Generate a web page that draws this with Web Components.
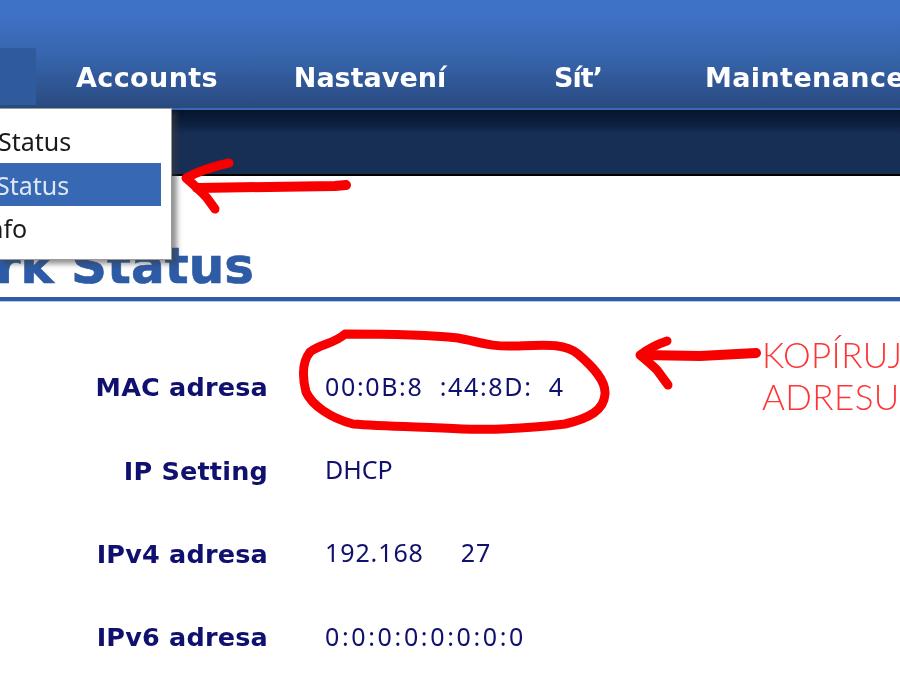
<!DOCTYPE html>
<html>
<head>
<meta charset="utf-8">
<title>Network Status</title>
<style>
  html, body { margin: 0; padding: 0; background: #fff; overflow: hidden; }
  body { width: 900px; height: 700px; position: relative; font-family: "Noto Sans", sans-serif; filter: blur(0.45px); }
</style>
</head>
<body>
<top-bar>
  <nav-tab slot="tabs" active style="--w:36px"></nav-tab>
  <nav-tab slot="tabs" style="--w:222px">Accounts</nav-tab>
  <nav-tab slot="tabs" style="--w:224px;letter-spacing:0">Nastavení</nav-tab>
  <nav-tab slot="tabs" style="--w:192px;letter-spacing:-1px">Sít’</nav-tab>
  <nav-tab slot="tabs" style="--w:262px">Maintenance</nav-tab>
</top-bar>
<page-title>rk Status</page-title>
<status-table>
  <status-row label="MAC adresa" style="--ls:1.65px">00:0B:8  :44:8D:  4</status-row>
  <status-row label="IP Setting">DHCP</status-row>
  <status-row label="IPv4 adresa" style="--ls:0.9px">192.168     27</status-row>
  <status-row label="IPv6 adresa" style="--ls:2.65px">0:0:0:0:0:0:0:0</status-row>
</status-table>
<drop-menu>
  <menu-item style="--x:-1px">Status</menu-item>
  <menu-item selected style="--x:-3px">Status</menu-item>
  <menu-item style="--x:-11px">nfo</menu-item>
</drop-menu>
<red-marks></red-marks>

<script>
class TopBar extends HTMLElement {
  constructor() {
    super();
    this.attachShadow({ mode: "open" });
    this.shadowRoot.innerHTML = `
    <style>
      :host { display: block; }
      .bar {
        height: 108px;
        display: flex;
        align-items: flex-end;
        overflow: hidden;
        background: linear-gradient(#3e72c6 0, #3e72c6 12%, #3766ae 50%, #2a4a80 100%);
        border-bottom: 2px solid #3b69b3;
      }
      .sub {
        height: 64px;
        background: linear-gradient(#06152e 0, #0c2040 22%, #182f55 38%, #182f55 100%);
        border-bottom: 2px solid #000;
      }
    </style>
    <div class="bar"><slot name="tabs"></slot></div>
    <div class="sub"></div>
    `;
  }
}

class NavTab extends HTMLElement {
  constructor() {
    super();
    this.attachShadow({ mode: "open" });
    this.shadowRoot.innerHTML = `
    <style>
      :host {
        display: flex;
        flex: none;
        width: var(--w);
        height: 60px;
        align-items: center;
        justify-content: center;
        padding-bottom: 2px;
        box-sizing: border-box;
        color: #fff;
        font: bold 27px "DejaVu Sans", sans-serif;
        letter-spacing: 0.4px;
        white-space: nowrap;
      }
      :host([active]) { background: #2f5a9c; height: 57px; margin-bottom: 3px; }
    </style>
    <slot></slot>
    `;
  }
}

class PageTitle extends HTMLElement {
  constructor() {
    super();
    this.attachShadow({ mode: "open" });
    this.shadowRoot.innerHTML = `
    <style>
      :host {
        display: block;
        height: 125px;
        box-sizing: border-box;
        border-bottom: 4px solid #2f5ca6;
        box-shadow: 0 1px 0 #b9c9e2;
      }
      .t {
        width: 254px;
        height: 121px;
        box-sizing: border-box;
        padding-bottom: 2px;
        display: flex;
        justify-content: flex-end;
        align-items: flex-end;
        overflow: hidden;
        color: #2d5ba5;
        font: bold 50px/58px "DejaVu Sans", sans-serif;
        -webkit-text-stroke: 0.7px #2d5ba5;
        white-space: nowrap;
      }
    </style>
    <div class="t"><slot></slot></div>
    `;
  }
}

class StatusTable extends HTMLElement {
  constructor() {
    super();
    this.attachShadow({ mode: "open" });
    this.shadowRoot.innerHTML = `
    <style>
      :host { display: block; padding-top: 43px; }
      div { display: grid; grid-auto-rows: 83.4px; }
    </style>
    <div><slot></slot></div>
    `;
  }
}

class StatusRow extends HTMLElement {
  constructor() {
    super();
    this.attachShadow({ mode: "open" });
    this.shadowRoot.innerHTML = `
    <style>
      :host {
        display: grid;
        grid-template-columns: 268px 1fr;
        column-gap: 57px;
        align-items: center;
        color: #10106e;
      }
      .label {
        text-align: right;
        padding-top: 3px;
        font: bold 25.5px "DejaVu Sans", sans-serif;
        letter-spacing: 0.2px;
        white-space: nowrap;
      }
      .value { font: 25px "Noto Sans", sans-serif; letter-spacing: var(--ls, 0); white-space: pre; }
    </style>
    <span class="label"></span>
    <span class="value"><slot></slot></span>
    `;
  }

  connectedCallback() {
    this.shadowRoot.querySelector(".label").textContent = this.getAttribute("label") ?? "";
  }
}

class DropMenu extends HTMLElement {
  constructor() {
    super();
    this.attachShadow({ mode: "open" });
    this.shadowRoot.innerHTML = `
    <style>
      :host {
        position: absolute;
        left: -2px;
        top: 108px;
        width: 174px;
        height: 152px;
        box-sizing: border-box;
        padding-top: 10px;
        background: #fff;
        border: 1px solid #999;
        box-shadow: 5px 4px 5px rgba(60, 60, 60, 0.55);
      }
    </style>
    <slot></slot>
    `;
  }
}

class MenuItem extends HTMLElement {
  constructor() {
    super();
    this.attachShadow({ mode: "open" });
    this.shadowRoot.innerHTML = `
    <style>
      :host {
        display: flex;
        align-items: center;
        width: 162px;
        height: 44px;
        color: #1a1a1a;
        font: 25px "Noto Sans", sans-serif;
      }
      :host([selected]) { background: #3768b4; color: #dfe7f4; height: 43px; }
      span { margin-left: var(--x, 0); }
    </style>
    <span><slot></slot></span>
    `;
  }
}

class RedMarks extends HTMLElement {
  constructor() {
    super();
    this.attachShadow({ mode: "open" });
    this.shadowRoot.innerHTML = `
    <style>
      :host { position: absolute; left: 0; top: 0; width: 900px; height: 700px; }
      svg { position: absolute; left: 0; top: 0; }
      path { fill: none; stroke: #f80000; stroke-linejoin: round; stroke-linecap: round; }
      .note {
        position: absolute;
        left: 762px;
        top: 333px;
        color: #ff3434;
        font: 300 35px/42px Lato, sans-serif;
        letter-spacing: 0.4px;
        white-space: nowrap;
      }
    </style>
    <svg width="900" height="700" viewBox="0 0 900 700">
      <path stroke-width="10" d="M197 188 L335 186 L346 185"/>
      <path stroke-width="9" d="M229 163 Q205 168 186 178 Q200 190 207 198 L215 209"/>
      <path stroke-width="9" d="M345 334 C380 334 430 335 458 338 C480 342 490 347 515 346 C545 345 565 343 578 354 C592 366 606 380 605 394 C604 410 590 418 565 424 C530 428 490 430 462 429 C420 427 380 426 353 424 C330 418 312 405 306 392 C302 376 302 362 310 352 C320 344 334 344 345 334 Z"/>
      <path stroke-width="10" d="M642 355 L700 356 L756 353"/>
      <path stroke-width="9" d="M667 341 Q652 346 640 355 Q652 365 657 370 L668 385"/>
    </svg>
    <div class="note">KOPÍRUJ<br>ADRESU</div>
    `;
  }
}

customElements.define("top-bar", TopBar);
customElements.define("nav-tab", NavTab);
customElements.define("page-title", PageTitle);
customElements.define("status-table", StatusTable);
customElements.define("status-row", StatusRow);
customElements.define("drop-menu", DropMenu);
customElements.define("menu-item", MenuItem);
customElements.define("red-marks", RedMarks);
</script>
</body>
</html>
